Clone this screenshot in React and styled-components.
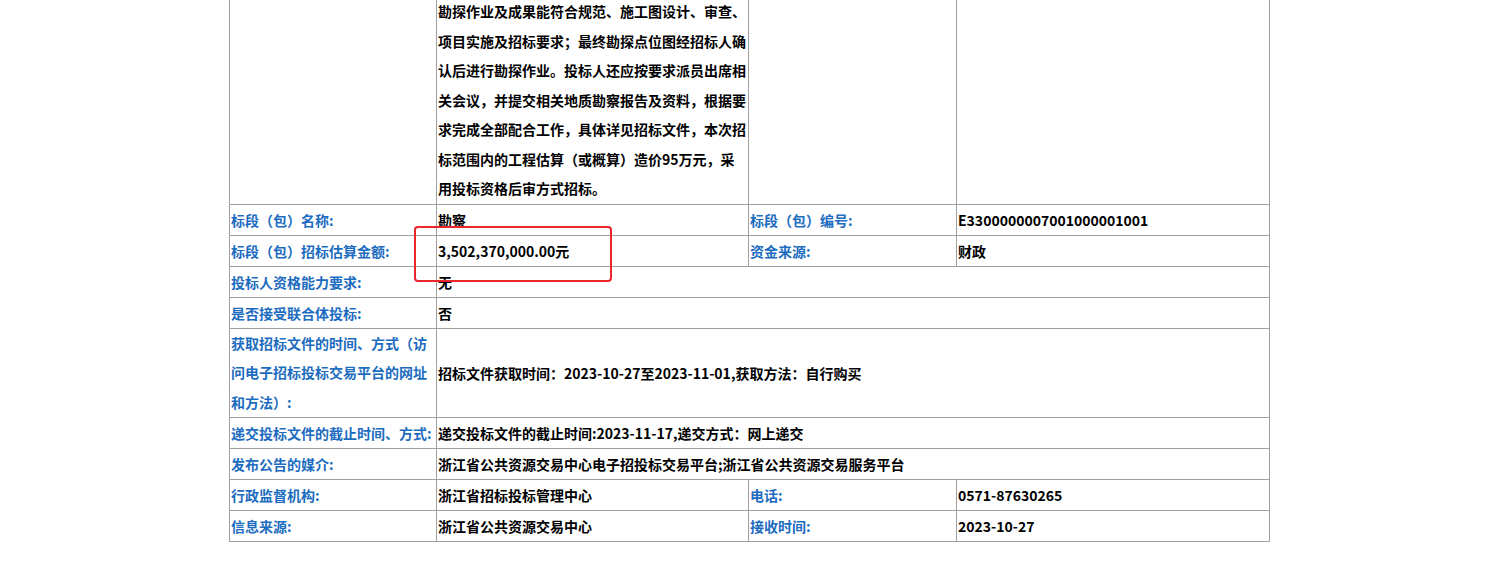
import React from "react";
import styled, { createGlobalStyle } from "styled-components";

const G = createGlobalStyle`
  body{margin:0;background:#fff;font-family:"Microsoft YaHei","Noto Sans CJK SC",sans-serif;}
`;
const Wrap = styled.div`position:relative;width:1487px;height:575px;overflow:hidden;`;
const Table = styled.table`
  margin-left:229px;margin-top:-4px;width:1040px;border-collapse:collapse;table-layout:fixed;
  font-size:14px;font-weight:bold;
  td{border:1px solid #a0a0a0;padding:0 1px;height:30px;vertical-align:middle;color:#000;}
`;
const L = styled.td`color:#1c6cc0 !important;`;
const Multi = styled.td`line-height:29.5px;`;
const Box = styled.div`position:absolute;left:414px;top:226px;width:194px;height:52px;border:2px solid #e8262c;border-radius:4px;`;

export default function App(){
  return <Wrap><G/>
    <Table>
      <colgroup><col style={{width:207}}/><col style={{width:312}}/><col style={{width:208}}/><col style={{width:313}}/></colgroup>
      <tbody>
        <tr><td/><Multi>勘探作业及成果能符合规范、施工图设计、审查、项目实施及招标要求；最终勘探点位图经招标人确认后进行勘探作业。投标人还应按要求派员出席相关会议，并提交相关地质勘察报告及资料，根据要求完成全部配合工作，具体详见招标文件，本次招标范围内的工程估算（或概算）造价95万元，采用投标资格后审方式招标。</Multi><td/><td/></tr>
        <tr><L>标段（包）名称:</L><td>勘察</td><L>标段（包）编号:</L><td>E3300000007001000001001</td></tr>
        <tr><L>标段（包）招标估算金额:</L><td>3,502,370,000.00元</td><L>资金来源:</L><td>财政</td></tr>
        <tr><L>投标人资格能力要求:</L><td colSpan={3}>无</td></tr>
        <tr><L>是否接受联合体投标:</L><td colSpan={3}>否</td></tr>
        <tr><Multi as={L}>获取招标文件的时间、方式（访问电子招标投标交易平台的网址和方法）:</Multi><td colSpan={3}>招标文件获取时间：2023-10-27至2023-11-01,获取方法：自行购买</td></tr>
        <tr><L>递交投标文件的截止时间、方式:</L><td colSpan={3}>递交投标文件的截止时间:2023-11-17,递交方式：网上递交</td></tr>
        <tr><L>发布公告的媒介:</L><td colSpan={3}>浙江省公共资源交易中心电子招投标交易平台;浙江省公共资源交易服务平台</td></tr>
        <tr><L>行政监督机构:</L><td>浙江省招标投标管理中心</td><L>电话:</L><td>0571-87630265</td></tr>
        <tr><L>信息来源:</L><td>浙江省公共资源交易中心</td><L>接收时间:</L><td>2023-10-27</td></tr>
      </tbody>
    </Table>
    <Box/>
  </Wrap>;
}
